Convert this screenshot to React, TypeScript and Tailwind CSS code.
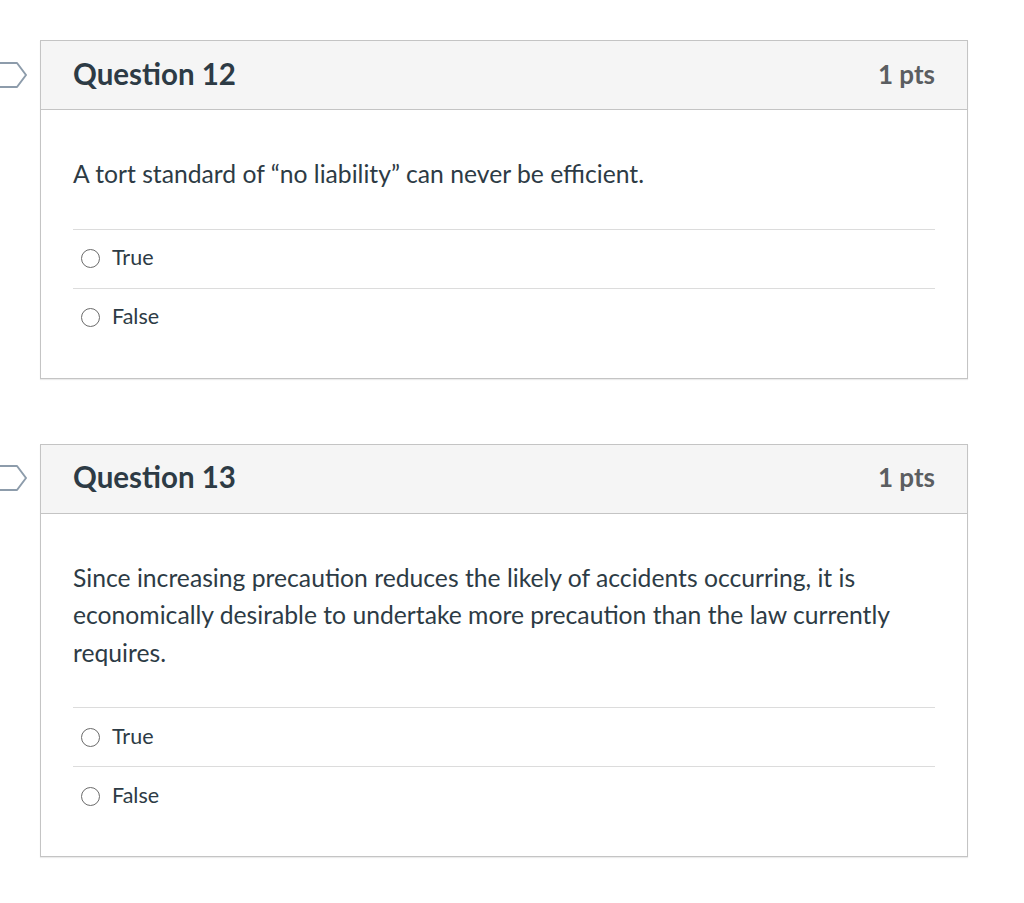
const questions = [
  {
    id: 12,
    points: 1,
    text: 'A tort standard of \u201cno liability\u201d can never be efficient.',
    answers: ['True', 'False'],
  },
  {
    id: 13,
    points: 1,
    text: 'Since increasing precaution reduces the likely of accidents occurring, it is economically desirable to undertake more precaution than the law currently requires.',
    answers: ['True', 'False'],
  },
];

function FlagIcon() {
  return (
    <svg width="28" height="28" viewBox="0 0 28 28" fill="none" className="block">
      <path d="M-4 2 H17 L26 14 L17 26 H-4" stroke="#8d9cab" strokeWidth="2" strokeLinejoin="round" />
    </svg>
  );
}

function Radio() {
  return <span className="block h-[19px] w-[19px] shrink-0 rounded-full border-[1.5px] border-[#6b6b6b] bg-white" />;
}

function QuestionCard({ q }: { q: (typeof questions)[number] }) {
  return (
    <div className="flex">
      <div className="flex h-[69px] w-[40px] items-center">
        <FlagIcon />
      </div>
      <div className="w-[928px] border border-[#c4c4c4] bg-white shadow-[0_1px_1px_rgba(0,0,0,0.08)]">
        <div className="flex h-[69px] items-center justify-between border-b border-[#c4c4c4] bg-[#f5f5f5] px-[32px]">
          <h2 className="pb-[2px] text-[29.5px] font-bold text-[#2d3b45]">Question {q.id}</h2>
          <span className="pb-[2px] text-[26px] font-bold text-[#5b5e61]">{q.points} pts</span>
        </div>
        <div className="px-[32px] pt-[45px] pb-[31px]">
          <p className="text-[24.7px] leading-[37.6px] text-[#2d3b45]">{q.text}</p>
          <div className="mt-[36px]">
            {q.answers.map((a) => (
              <div key={a} className="flex h-[59px] items-center gap-[12px] border-t border-[#dcdcdc] pl-[8px]">
                <Radio />
                <span className="pb-[3px] text-[21.5px] text-[#2d3b45]">{a}</span>
              </div>
            ))}
          </div>
        </div>
      </div>
    </div>
  );
}

export default function App() {
  return (
    <div className="min-h-[903px] bg-white pt-[40px] font-['Lato','Noto_Sans',sans-serif]">
      <div className="flex flex-col gap-[65px]">
        {questions.map((q) => (
          <QuestionCard key={q.id} q={q} />
        ))}
      </div>
    </div>
  );
}
